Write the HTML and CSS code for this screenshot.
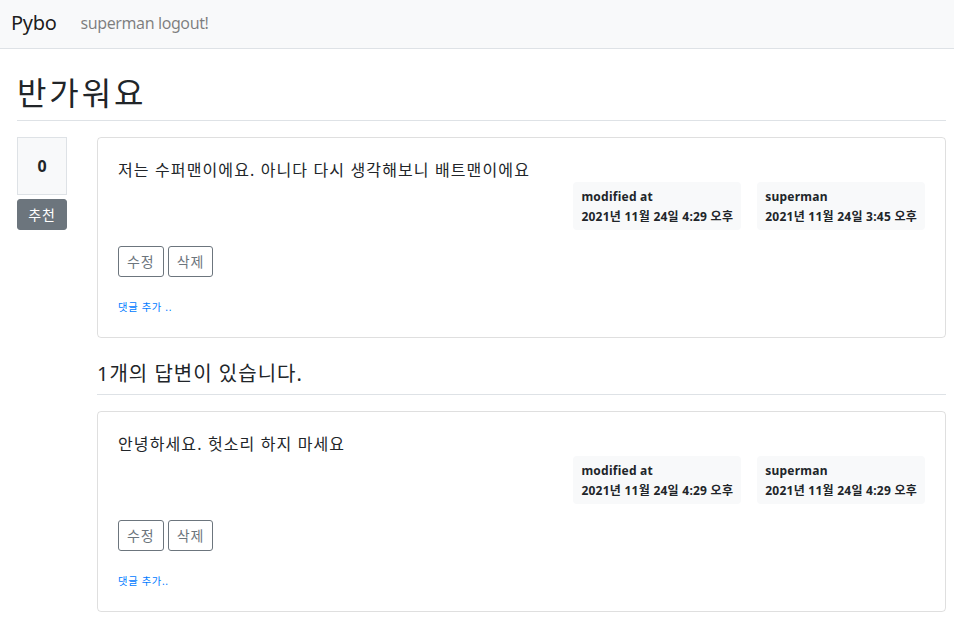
FILE: index.html
```
<!DOCTYPE html>
<html lang="ko">
<head>
<meta charset="utf-8">
<title>Pybo</title>
<link rel="stylesheet" href="styles.css">
</head>
<body>
<nav class="navbar">
  <a class="brand" href="#">Pybo</a>
  <a class="nav-link" href="#">superman logout!</a>
</nav>
<main class="container">
  <h2 class="title ko">반가워요</h2>
  <div class="row">
    <div class="vote-col">
      <div class="vote-count">0</div>
      <a class="btn-recommend ko" href="#">추천</a>
    </div>
    <div class="main-col">
      <div class="card">
        <div class="card-text ko">저는 수퍼맨이에요. 아니다 다시 생각해보니 배트맨이에요</div>
        <div class="badges">
          <div class="badge"><div class="badge-label">modified at</div><div>2021년 11월 24일 4:29 오후</div></div>
          <div class="badge"><div class="badge-label">superman</div><div>2021년 11월 24일 3:45 오후</div></div>
        </div>
        <div class="actions">
          <a class="btn-outline ko" href="#">수정</a>
          <a class="btn-outline ko" href="#">삭제</a>
        </div>
        <div class="comment"><a class="comment-link ko" href="#">댓글 추가 ..</a></div>
      </div>
      <h5 class="answer-head ko">1개의 답변이 있습니다.</h5>
      <div class="card">
        <div class="card-text ko">안녕하세요. 헛소리 하지 마세요</div>
        <div class="badges">
          <div class="badge"><div class="badge-label">modified at</div><div>2021년 11월 24일 4:29 오후</div></div>
          <div class="badge"><div class="badge-label">superman</div><div>2021년 11월 24일 4:29 오후</div></div>
        </div>
        <div class="actions">
          <a class="btn-outline ko" href="#">수정</a>
          <a class="btn-outline ko" href="#">삭제</a>
        </div>
        <div class="comment"><a class="comment-link ko" href="#">댓글 추가..</a></div>
      </div>
    </div>
  </div>
</main>
</body>
</html>
```
FILE: styles.css
```
* { box-sizing: border-box; }
html, body { margin: 0; padding: 0; }
body {
  font-family: "Noto Sans", "Noto Sans CJK KR", sans-serif;
  font-size: 16px;
  line-height: 1.5;
  color: #212529;
  background: #fff;
}
a { text-decoration: none; }
.ko { letter-spacing: 0.07em; }
.navbar {
  height: 49px;
  display: flex;
  align-items: center;
  padding: 0 11px 2px;
  background: #f8f9fa;
  border-bottom: 1px solid #dee2e6;
}
.brand {
  font-size: 20px;
  color: rgba(0,0,0,.9);
  margin-right: 16px;
  line-height: 30px;
  letter-spacing: -0.3px;
}
.nav-link {
  color: rgba(0,0,0,.5);
  padding: 0 8px;
  line-height: 24px;
  letter-spacing: -0.4px;
}
.container {
  padding: 16px 8px 0 17px;
}
.title {
  margin: 0;
  padding: 8px 0;
  font-size: 32px;
  font-weight: 400;
  line-height: 39px;
  letter-spacing: 0.09em;
  border-bottom: 1px solid #dee2e6;
}
.row {
  display: grid;
  grid-template-columns: 50px 1fr;
  column-gap: 30px;
  margin-top: 16px;
}
.vote-count {
  background: #f8f9fa;
  border: 1px solid #dee2e6;
  text-align: center;
  padding: 16px;
  font-weight: 700;
  margin-bottom: 4px;
}
.btn-recommend {
  display: block;
  background: #6c757d;
  color: #fff;
  text-align: center;
  font-size: 14px;
  line-height: 21px;
  padding: 4px 0;
  border: 1px solid #6c757d;
  border-radius: 3px;
}
.card {
  border: 1px solid rgba(0,0,0,.125);
  border-radius: 4px;
  padding: 20px;
}
.card-text { line-height: 24px; height: 24px; }
.badges {
  display: flex;
  justify-content: flex-end;
  gap: 16px;
}
.badge {
  background: #f8f9fa;
  border-radius: 4px;
  padding: 9px 8px 7px;
  font-size: 12px;
  font-weight: 700;
  line-height: 12px;
  letter-spacing: 0.25px;
}
.badge-label { margin-bottom: 8px; }
.actions {
  display: flex;
  gap: 4px;
  margin: 16px 0;
}
.btn-outline {
  display: block;
  border: 1px solid #6c757d;
  color: #6c757d;
  font-size: 14px;
  line-height: 21px;
  padding: 4px 8px;
  border-radius: 3px;
}
.comment { height: 24px; padding-top: 6px; }
.comment-link {
  display: block;
  color: #007bff;
  font-size: 10.24px;
  line-height: 16px;
}
.answer-head {
  margin: 16px 0;
  padding: 8px 0;
  font-size: 20px;
  font-weight: 400;
  line-height: 24px;
  letter-spacing: 0.05em;
  border-bottom: 1px solid #dee2e6;
}
```
